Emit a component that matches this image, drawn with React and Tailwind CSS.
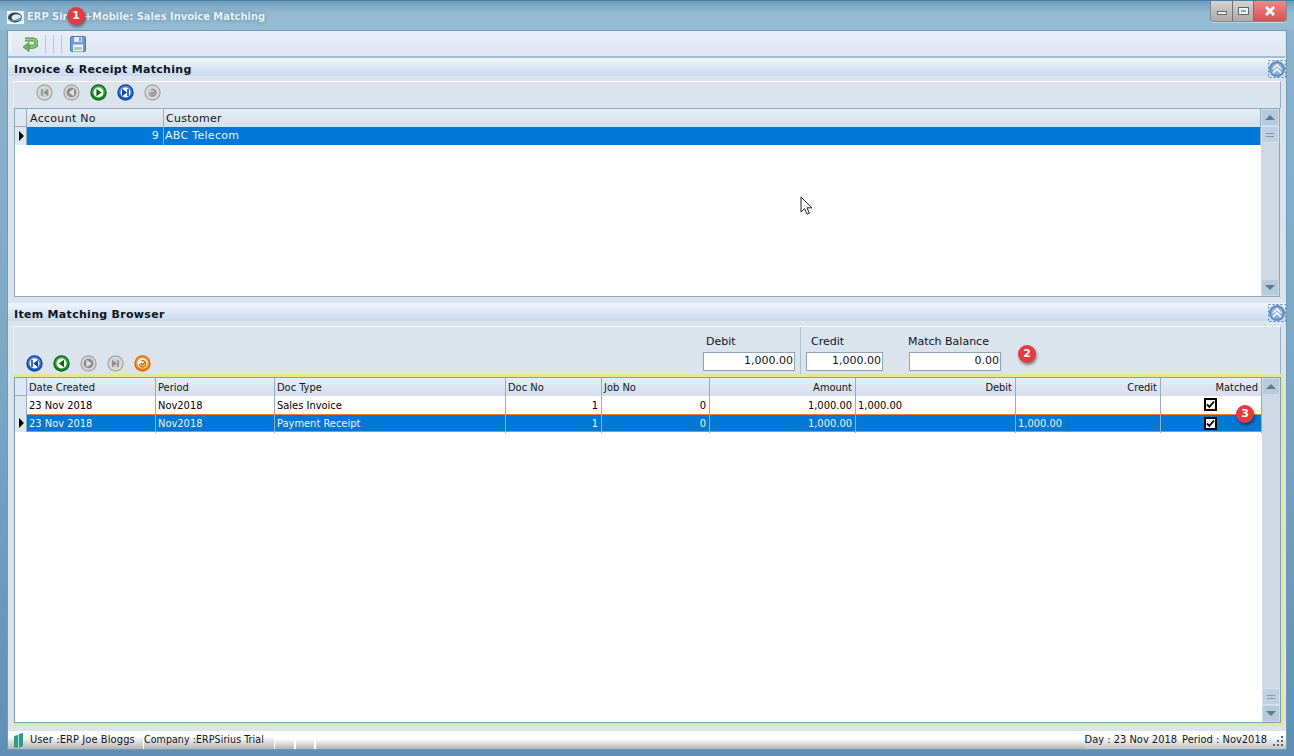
import React from "react";

const FONT = "[font-family:'DejaVu_Sans',sans-serif]";
const COND = "[font-family:'DejaVu_Sans_Condensed','DejaVu_Sans',sans-serif]";

function Round({ c, d, glyph, hi }) {
  const id = `g${c.replace("#", "")}`;
  const gray = hi === "#e6e6e6";
  const solid = gray && (glyph === "prev" || glyph === "next");
  const ink = solid ? "#e2e2e2" : gray ? "#8f8f8f" : d;
  return (
    <svg width="17" height="17" viewBox="0 0 17 17" className="block shrink-0">
      <defs>
        <linearGradient id={id} x1="0" y1="0" x2="0" y2="1">
          <stop offset="0" stopColor={hi} />
          <stop offset="1" stopColor={c} />
        </linearGradient>
      </defs>
      <circle cx="8.5" cy="8.5" r="8.2" fill={gray ? "#a8a8a8" : d} />
      <circle cx="8.5" cy="8.5" r="6.8" fill={gray ? "#dcdcdc" : `url(#${id})`} />
      <circle cx="8.5" cy="8.5" r="5" fill={solid ? "#8f8f8f" : gray ? "#cfcfcf" : "#fff"} />
      {glyph === "first" && <path d="M5.2 5h1.6v7H5.2zM12.2 4.8v7.4L7.2 8.5z" fill={ink} />}
      {glyph === "prev" && <path d="M11 4.8v7.4L5.8 8.5z" fill={ink} />}
      {glyph === "next" && <path d="M6.4 4.8v7.4l5.2-3.7z" fill={ink} />}
      {glyph === "last" && <path d="M5 4.8v7.4l5-3.7zM10.2 5h1.6v7h-1.6z" fill={ink} />}
      {glyph === "refresh" && (
        <path d="M5.4 9a3.2 3.2 0 1 0 2-3.2M6.6 8l1.8 1.8 3.2-3.4" fill="none" stroke={ink} strokeWidth="1.5" />
      )}
    </svg>
  );
}

const GRAY = { c: "#9a9a9a", d: "#808080", hi: "#e6e6e6" };
const GREEN = { c: "#0f8a1c", d: "#0a6a12", hi: "#45b64d" };
const BLUE = { c: "#1558c0", d: "#0f46a8", hi: "#5b92e0" };
const ORANGE = { c: "#ee7f12", d: "#d86a08", hi: "#f8b060" };

function Badge({ n, className }) {
  return (
    <div
      className={`absolute w-[18px] h-[18px] rounded-full bg-[#e63a42] text-white text-[11px] font-bold flex items-center justify-center shadow-[1px_2px_3px_rgba(0,0,0,0.45)] ${FONT} ${className}`}
    >
      {n}
    </div>
  );
}

function Collapse({ className }) {
  return (
    <svg width="18" height="18" viewBox="0 0 18 18" className={`block ${className}`}>
      <rect x="0.5" y="0.5" width="17" height="17" fill="none" stroke="#4f83bd" strokeDasharray="2 2" />
      <circle cx="9" cy="9" r="8" fill="#5f8dc0" />
      <circle cx="9" cy="9" r="6" fill="#8db0d8" />
      <path d="M5 9l4-4 4 4M5 13l4-4 4 4" fill="none" stroke="#fff" strokeWidth="1.6" />
    </svg>
  );
}

function SectionHead({ title, collapseClass }) {
  return (
    <div className="h-[18px] shrink-0 bg-gradient-to-b from-[#f0f5fc] to-[#c9d9ee] flex items-center justify-between pl-[6px] relative">
      <span className={`text-[11px] font-bold text-[#10141c] tracking-[0.3px] translate-y-[3px] ${FONT}`}>{title}</span>
      <Collapse className={collapseClass} />
    </div>
  );
}

function Scrollbar({ thumbBottom }) {
  const Btn = ({ children }) => (
    <div className="h-[17px] bg-[#b5cadb] border border-[#cddbe7] flex items-center justify-center">{children}</div>
  );
  const Thumb = () => (
    <div className="h-[17px] bg-[#bfd0e0] border border-[#d5e1ec] flex flex-col items-center justify-center gap-[2px]">
      <div className="w-[8px] h-px bg-[#8299ad]" />
      <div className="w-[8px] h-px bg-[#8299ad]" />
    </div>
  );
  return (
    <div className="w-[18px] shrink-0 bg-[#ced9e4] flex flex-col">
      <Btn>
        <div className="w-0 h-0 border-x-[5px] border-x-transparent border-b-[5px] border-b-[#62788c]" />
      </Btn>
      {!thumbBottom && <Thumb />}
      <div className="flex-1" />
      {thumbBottom && <Thumb />}
      <Btn>
        <div className="w-0 h-0 border-x-[5px] border-x-transparent border-t-[5px] border-t-[#62788c]" />
      </Btn>
    </div>
  );
}

const Arrow = () => <div className="w-0 h-0 border-y-[5px] border-y-transparent border-l-[5px] border-l-black ml-px" />;

function RowHead({ active, h }) {
  return (
    <div className={`w-[12px] shrink-0 bg-[#dfe7f0] border-r border-[#93adc4] flex items-center justify-center ${h}`}>
      {active && <Arrow />}
    </div>
  );
}

const COLS2 =
  "grid grid-cols-[129px_119px_231px_96px_108px_146px_160px_145px_101px]";

function Check({ sel }) {
  return (
    <div className={`w-[13px] h-[13px] bg-white border-2 border-black flex items-center justify-center mr-[2px] ${sel ? "-mt-[2px]" : "-mt-[3px]"}`}>
      <svg width="9" height="9" viewBox="0 0 9 9">
        <path d="M1 4.5l2.4 2.4L8 1.5" fill="none" stroke="#000" strokeWidth="1.8" />
      </svg>
    </div>
  );
}

function Cell({ right, children, sel, center, className = "" }) {
  return (
    <div
      className={`border-r border-[#93adc4] flex items-center px-[2px] whitespace-nowrap ${
        right ? "justify-end pr-[3px]" : ""
      } ${center ? "justify-center" : ""} ${sel ? "text-[#eef4fa] pt-px" : "text-black pt-[2px]"} ${className}`}
    >
      {children}
    </div>
  );
}

function Hd({ right, children }) {
  return (
    <div
      className={`border-r border-[#93adc4] bg-gradient-to-b from-[#e6edf5] to-[#d3deea] flex items-center px-[2px] pt-[2px] text-[#10141c] whitespace-nowrap ${
        right ? "justify-end pr-[3px]" : ""
      }`}
    >
      {children}
    </div>
  );
}

function Row({ data, sel }) {
  return (
    <div
      className={`${COLS2} h-[18px] flex-1 ${
        sel ? "bg-[#0078d7] border-y border-[#ee8030]" : "bg-white"
      }`}
    >
      <Cell sel={sel}>{data[0]}</Cell>
      <Cell sel={sel}>{data[1]}</Cell>
      <Cell sel={sel}>{data[2]}</Cell>
      <Cell sel={sel} right>{data[3]}</Cell>
      <Cell sel={sel} right>{data[4]}</Cell>
      <Cell sel={sel} right>{data[5]}</Cell>
      <Cell sel={sel}>{data[6]}</Cell>
      <Cell sel={sel}>{data[7]}</Cell>
      <Cell center sel={sel}>
        <Check sel={sel} />
      </Cell>
    </div>
  );
}

function Money({ label, value, w, labelClass }) {
  return (
    <div className="flex flex-col gap-[2px]">
      <span className={`text-[11px] text-[#10141c] h-[16px] ${labelClass}`}>{label}</span>
      <div className={`h-[19px] bg-white border border-[#8ea3b5] flex items-center justify-end pr-[1px] text-[11px] text-[#10141c] ${w}`}>
        {value}
      </div>
    </div>
  );
}

export default function App() {
  return (
    <div className={`relative w-[1294px] h-[756px] overflow-hidden flex flex-col bg-gradient-to-b from-[#8db4cd] via-[#7ba7c6] to-[#5f8fb6] border-t border-[#4b7ca3] ${FONT}`}>
      {/* Title bar */}
      <div className="h-[29px] shrink-0 flex items-start relative bg-gradient-to-b from-[#6f9dbd] to-[#95bbd2] to-40%">
        <div className="ml-[7px] mt-[8px] flex items-center gap-[3px]">
          <svg width="17" height="13" viewBox="0 0 17 13" className="block">
            <rect width="17" height="13" fill="#f0f4f8" />
            <ellipse cx="8" cy="6.5" rx="7" ry="5" fill="#2c4258" />
            <ellipse cx="9.5" cy="6.5" rx="5" ry="3.2" fill="#dfe9f2" />
            <path d="M2 8.5c4 2 9 1 12-2" stroke="#4fa0b5" strokeWidth="1.2" fill="none" />
          </svg>
          <span className={`text-[11px] font-bold text-[#e8f1f7] [text-shadow:0_0_4px_rgba(60,100,130,0.7)] ${COND}`}>
            ERP Sirius+Mobile: Sales Invoice Matching
          </span>
        </div>
        <Badge n="1" className="left-[67px] top-[6px]" />
        <div className="absolute right-[7px] top-0 h-[21px] flex rounded-b-[4px] overflow-hidden border border-t-0 border-[#7d8a94] shadow-[0_1px_0_rgba(255,255,255,0.4)]">
          <div className="w-[22px] bg-gradient-to-b from-[#d5d3d0] to-[#aeaaa6] border-r border-[#6f7479] flex items-center justify-center">
            <div className="w-[10px] h-[4px] bg-[#eef1f3] border border-[#5d666e] mt-[3px]" />
          </div>
          <div className="w-[21px] bg-gradient-to-b from-[#d5d3d0] to-[#aeaaa6] border-r border-[#6f7479] flex items-center justify-center">
            <div className="w-[11px] h-[8px] bg-[#eef1f3] border border-[#5d666e] flex items-center justify-center">
              <div className="w-[5px] h-[2px] bg-[#9da3a8]" />
            </div>
          </div>
          <div className="w-[32px] bg-gradient-to-b from-[#e98a8a] to-[#d84f50] flex items-center justify-center">
            <svg width="12" height="10" viewBox="0 0 12 10">
              <path d="M2 1l8 8M10 1l-8 8" stroke="#fff" strokeWidth="2.8" />
            </svg>
          </div>
        </div>
      </div>

      {/* Body */}
      <div className="flex-1 min-h-0 mx-[7px] mb-[6px] border border-[#6f9ab8] bg-[#dbe4ed] flex flex-col">
        {/* Toolbar */}
        <div className="h-[27px] shrink-0 mr-[1px] bg-gradient-to-b from-[#e8eef7] to-[#dfe7f3] border-b-2 border-[#a3bdd2] flex items-center pl-[2px]">
          <div className="w-px h-[18px] bg-[#b5c6d6] border-r border-white" />
          <svg width="16" height="15" viewBox="0 0 16 15" className="ml-[11px] mt-[2px]">
            <path d="M3 2.5h8a3.6 3.6 0 0 1 0 7.2H5" fill="none" stroke="#3f8f3c" strokeWidth="4" />
            <path d="M3 2.5h8a3.6 3.6 0 0 1 0 7.2H5" fill="none" stroke="#8ed07c" strokeWidth="2" />
            <path d="M7 5.5v9L1 10z" fill="#6cb95a" stroke="#3f8f3c" strokeWidth="0.8" />
          </svg>
          <div className="ml-[7px] w-px h-[18px] bg-[#b5c6d6]" />
          <div className="ml-[7px] w-px h-[18px] bg-[#b5c6d6]" />
          <div className="ml-[7px] w-px h-[18px] bg-[#b5c6d6]" />
          <svg width="16" height="16" viewBox="0 0 16 16" className="ml-[8px]">
            <rect x="0.5" y="0.5" width="15" height="15" rx="1" fill="#6e9bd8" stroke="#4576b8" />
            <rect x="4" y="1" width="8" height="5" fill="#e4ecf7" />
            <rect x="9" y="1.6" width="2" height="3.6" fill="#6e9bd8" />
            <rect x="3" y="8.5" width="10" height="7" fill="#eef3f4" />
            <rect x="4" y="11" width="8" height="3" fill="#a8d29a" />
          </svg>
        </div>

        <SectionHead title="Invoice & Receipt Matching" collapseClass="translate-y-[2px]" />

        <div className="flex-1 min-h-0 flex flex-col">
          {/* Upper pane */}
          <div className="h-[221px] shrink-0 pl-[5px] pr-[5px] pt-[5px] flex flex-col">
            <div className="h-[27px] shrink-0 border-t border-l border-t-white border-l-[#e6edf3] border-r border-r-[#93adc4] flex items-start pt-[2px] pl-[22px] gap-[10px]">
              <Round {...GRAY} glyph="first" />
              <Round {...GRAY} glyph="prev" />
              <Round {...GREEN} glyph="next" />
              <Round {...BLUE} glyph="last" />
              <Round {...GRAY} glyph="refresh" />
            </div>
            <div className="flex-1 min-h-0 ml-[1px] mr-[1px] border border-[#8ba8c0] bg-white flex text-[11px] tracking-[0.3px]">
              <div className="flex-1 min-w-0 flex flex-col">
                <div className="flex h-[18px] border-b border-[#93adc4]">
                  <RowHead h="h-[17px]" />
                  <div className="flex-1 grid grid-cols-[137px_1fr]">
                    <Hd>
                      <span className="ml-px">Account No</span>
                    </Hd>
                    <Hd>Customer</Hd>
                  </div>
                </div>
                <div className="flex h-[18px]">
                  <RowHead active h="h-[18px]" />
                  <div className="flex-1 grid grid-cols-[137px_1fr] bg-[#0078d7]">
                    <Cell sel right className="pr-[4px] pt-[2px]">9</Cell>
                    <Cell sel className="pl-px pt-[2px]">ABC Telecom</Cell>
                  </div>
                </div>
              </div>
              <Scrollbar />
            </div>
          </div>

          <div className="h-[6px] shrink-0" />
          <SectionHead title="Item Matching Browser" collapseClass="translate-y-px" />

          {/* Lower pane */}
          <div className="flex-1 min-h-0 pl-[5px] pr-[2px] pt-[5px] pb-[5px] flex flex-col">
            <div className="h-[48px] shrink-0 mr-[3px] border-t border-l border-t-white border-l-[#e6edf3] border-r border-r-[#93adc4] flex">
              <div className="flex items-end pb-[2px] pl-[12px] gap-[10px] w-[689px] shrink-0">
                <Round {...BLUE} glyph="first" />
                <Round {...GREEN} glyph="prev" />
                <Round {...GRAY} glyph="next" />
                <Round {...GRAY} glyph="last" />
                <Round {...ORANGE} glyph="refresh" />
              </div>
              <div className="w-[98px] shrink-0 pt-[7px] border-r border-[#aebfce]">
                <Money label="Debit" value="1,000.00" w="w-[92px]" labelClass="pl-[3px]" />
              </div>
              <div className="pl-[5px] pt-[7px] w-[108px] shrink-0">
                <Money label="Credit" value="1,000.00" w="w-[77px]" labelClass="pl-[5px]" />
              </div>
              <div className="pt-[7px]">
                <Money label="Match Balance" value="0.00" w="w-[92px]" labelClass="-ml-px" />
              </div>
            </div>
            <div className="flex-1 min-h-0 bg-[#e6e88c] px-[1px] pt-[3px] pb-[3px] pr-[3px] flex">
              <div className={`flex-1 min-w-0 border border-[#7f9fb9] bg-white flex text-[11px] ${COND}`}>
                <div className="flex-1 min-w-0 flex flex-col">
                  <div className="flex h-[18px] border-b border-[#93adc4]">
                    <RowHead h="h-[17px]" />
                    <div className={`${COLS2} flex-1`}>
                      <Hd>Date Created</Hd>
                      <Hd>Period</Hd>
                      <Hd>Doc Type</Hd>
                      <Hd>Doc No</Hd>
                      <Hd>Job No</Hd>
                      <Hd right>Amount</Hd>
                      <Hd right>Debit</Hd>
                      <Hd right>Credit</Hd>
                      <Hd right>Matched</Hd>
                    </div>
                  </div>
                  <div className="flex h-[18px]">
                    <RowHead h="h-[18px]" />
                    <Row data={["23 Nov 2018", "Nov2018", "Sales Invoice", "1", "0", "1,000.00", "1,000.00", ""]} />
                  </div>
                  <div className="flex h-[18px]">
                    <RowHead active h="h-[18px]" />
                    <Row sel data={["23 Nov 2018", "Nov2018", "Payment Receipt", "1", "0", "1,000.00", "", "1,000.00"]} />
                  </div>
                </div>
                <Scrollbar thumbBottom />
              </div>
            </div>
          </div>
        </div>

        {/* Status bar */}
        <div className={`h-[18px] shrink-0 bg-white flex items-stretch text-[11px] text-[#10141c] ${COND}`}>
          <div className="w-[135px] bg-gradient-to-b from-white from-30% to-[#b4b4b4] flex items-center pl-[6px] gap-[6px]">
            <svg width="10" height="15" viewBox="0 0 10 15">
              <path d="M0 3l4-1v13l-4-1zM5 1l4-1v13l-4 2z" fill="#2f9a86" />
              <path d="M4 2l1-1v14l-1 0z" fill="#b9dcd4" />
            </svg>
            <span className="tracking-[0.1px]">User :ERP Joe Bloggs</span>
          </div>
          <div className="w-[130px] ml-px bg-gradient-to-b from-white from-30% to-[#b4b4b4] flex items-center text-[10.5px] tracking-[0.1px]">
            Company :ERPSirius Trial
          </div>
          <div className="w-[19px] ml-px mt-[8px] bg-gradient-to-b from-white to-[#b4b4b4]" />
          <div className="w-[18px] ml-[2px] mt-[8px] bg-gradient-to-b from-white to-[#b4b4b4]" />
          <div className="flex-1 ml-[2px] mt-[8px] bg-gradient-to-b from-white to-[#b4b4b4]" />
          <div className="flex items-center gap-[5px] pr-[2px] bg-gradient-to-b from-white from-30% to-[#c4c4c4]">
            <span>Day : 23 Nov 2018</span>
            <span>Period : Nov2018</span>
            <svg width="12" height="12" viewBox="0 0 12 12" className="mt-[2px]">
              <path d="M9 1h2v2H9zM5 5h2v2H5zM9 5h2v2H9zM1 9h2v2H1zM5 9h2v2H5zM9 9h2v2H9z" fill="#53697c" />
            </svg>
          </div>
        </div>
      </div>

      {/* Overlays */}
      <Badge n="2" className="left-[1018px] top-[344px]" />
      <Badge n="3" className="left-[1236px] top-[404px]" />
      <svg width="14" height="20" viewBox="0 0 14 20" className="absolute left-[800px] top-[195px]">
        <path d="M1 1v15l3.6-3.4 2.4 5.6 2.4-1-2.4-5.4h5z" fill="#fff" stroke="#222" strokeWidth="1" />
      </svg>
    </div>
  );
}
